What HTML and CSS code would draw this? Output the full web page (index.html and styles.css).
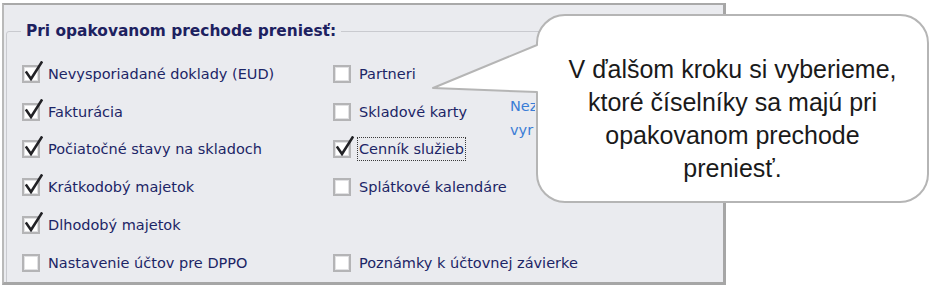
FILE: index.html
```html
<!DOCTYPE html>
<html lang="sk">
<head>
<meta charset="utf-8">
<title>Prechod</title>
<link rel="stylesheet" href="styles.css">
</head>
<body>
<div class="stage">
  <div class="panel">
    <fieldset class="group">
      <legend class="group-title">Pri opakovanom prechode preniesť:</legend>
      <div class="grid">
        <label class="item c1 r1"><span class="box checked"></span><span class="lbl">Nevysporiadané doklady (EUD)</span></label>
        <label class="item c2 r1"><span class="box"></span><span class="lbl">Partneri</span></label>
        <label class="item c1 r2"><span class="box checked"></span><span class="lbl">Fakturácia</span></label>
        <label class="item c2 r2"><span class="box"></span><span class="lbl">Skladové karty</span></label>
        <label class="item c1 r3"><span class="box checked"></span><span class="lbl">Počiatočné stavy na skladoch</span></label>
        <label class="item c2 r3"><span class="box checked"></span><span class="lbl focus">Cenník služieb</span></label>
        <label class="item c1 r4"><span class="box checked"></span><span class="lbl">Krátkodobý majetok</span></label>
        <label class="item c2 r4"><span class="box"></span><span class="lbl">Splátkové kalendáre</span></label>
        <label class="item c1 r5"><span class="box checked"></span><span class="lbl">Dlhodobý majetok</span></label>
        <label class="item c1 r6"><span class="box"></span><span class="lbl">Nastavenie účtov pre DPPO</span></label>
        <label class="item c2 r6"><span class="box"></span><span class="lbl">Poznámky k účtovnej závierke</span></label>
        <div class="note">pre<br>Nez<br>vyr</div>
      </div>
    </fieldset>
  </div>

  <div class="callout">
    <svg class="callout-shape" width="932" height="287" viewBox="0 0 932 287" aria-hidden="true">
      <path d="M565 15 H900 A28 28 0 0 1 928 43 V174 A28 28 0 0 1 900 202 H565 A28 28 0 0 1 537 174 V92 L433 88 L537 45 V43 A28 28 0 0 1 565 15 Z" fill="#ffffff" stroke="#b5b5b5" stroke-width="2" stroke-linejoin="round"/>
    </svg>
    <p class="callout-text">V ďalšom kroku si vyberieme, ktoré číselníky sa majú pri opakovanom prechode preniesť.</p>
  </div>
</div>
</body>
</html>
```
FILE: styles.css
```css
html, body {
  margin: 0;
  padding: 0;
  background: #ffffff;
}

.stage {
  position: relative;
  width: 932px;
  height: 287px;
  overflow: hidden;
}

.panel {
  box-sizing: border-box;
  margin: 3px 0 0 2px;
  width: 724px;
  height: 282px;
  background: #eaebef;
  border-top: 2px solid #a9a9a9;
  border-right: 3px solid #a6a6a6;
  border-bottom: 3px solid #a6a6a6;
  border-left: 2px solid #b9b9b9;
  overflow: hidden;
}

.group {
  margin: 17px -20px 0 2px;
  padding: 0;
  height: 400px;
  border: 1px solid #c9cacf;
  border-radius: 3px;
  font-family: "DejaVu Sans", Verdana, sans-serif;
}

.group-title {
  margin-left: 14px;
  padding: 0 5px 0 5px;
  font-weight: bold;
  font-size: 15.4px;
  color: #1d2160;
}

.grid {
  display: grid;
  grid-template-columns: 311px 177px 25px;
  grid-template-rows: repeat(6, 37.8px);
  margin: 15px 0 0 15px;
}

.item {
  display: flex;
  align-items: center;
  gap: 6px;
  font-size: 14.5px;
  color: #1c2566;
  white-space: nowrap;
}

.c1 { grid-column: 1; }
.c2 { grid-column: 2; }
.r1 { grid-row: 1; }
.r2 { grid-row: 2; }
.r3 { grid-row: 3; }
.r4 { grid-row: 4; }
.r5 { grid-row: 5; }
.r6 { grid-row: 6; }

.box {
  position: relative;
  box-sizing: border-box;
  flex: none;
  width: 18px;
  height: 18px;
  border: 2px solid #b4b4b6;
  background: #ffffff;
  box-shadow: inset 0 0 0 1px #e2e2e4;
}

.box.checked::after {
  content: "";
  position: absolute;
  left: 1px;
  top: -6px;
  width: 18px;
  height: 20px;
  background: no-repeat center / contain url("data:image/svg+xml;utf8,<svg xmlns='http://www.w3.org/2000/svg' viewBox='0 0 18 20'><path d='M1.5 11.5 L6 18 L16.5 1.5' fill='none' stroke='%23222226' stroke-width='2.6' stroke-linejoin='miter' stroke-linecap='square'/></svg>");
}

.lbl {
  padding: 3px 1px;
  border: 1px solid transparent;
}

.lbl.focus {
  border: 1px dotted #3a3a3a;
}

.note {
  grid-column: 3;
  grid-row: 1 / 4;
  align-self: start;
  margin-top: 15px;
  width: 25px;
  overflow: hidden;
  font-size: 14.5px;
  line-height: 24px;
  color: #3a7dd6;
  white-space: nowrap;
}

.callout {
  position: absolute;
  left: 0;
  top: 0;
  width: 932px;
  height: 287px;
}

.callout-shape {
  position: absolute;
  left: 0;
  top: 0;
}

.callout-text {
  position: absolute;
  left: 560px;
  top: 53px;
  width: 345px;
  margin: 0;
  font-family: "Liberation Sans", Arial, sans-serif;
  font-size: 25px;
  line-height: 33px;
  text-align: center;
  color: #1a1a1a;
}
```
